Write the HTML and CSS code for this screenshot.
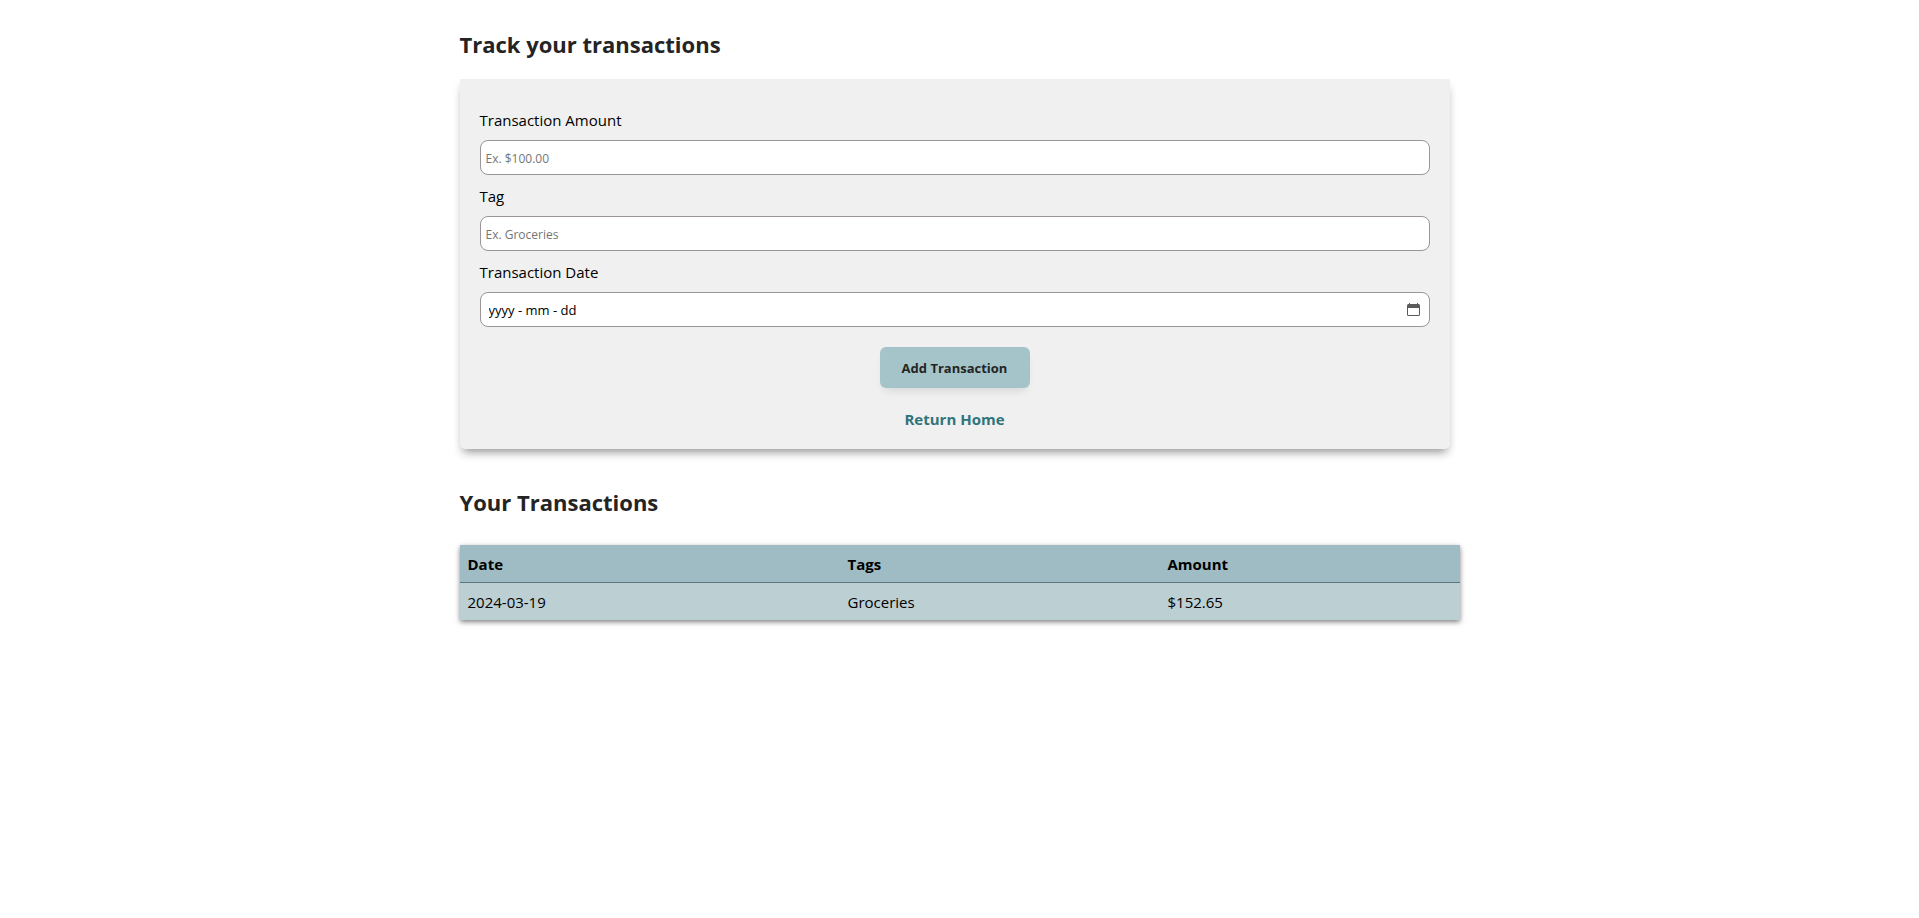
FILE: index.html
```html
<!DOCTYPE html>
<html lang="en">
<head>
<meta charset="utf-8">
<meta name="viewport" content="width=device-width, initial-scale=1">
<title>Track your transactions</title>
<link rel="stylesheet" href="styles.css">
</head>
<body>
<main class="page">
  <h1 class="heading">Track your transactions</h1>
  <form class="card">
    <label class="label" for="amount">Transaction Amount</label>
    <input class="field" id="amount" type="text" placeholder="Ex. $100.00">
    <label class="label" for="tag">Tag</label>
    <input class="field" id="tag" type="text" placeholder="Ex. Groceries">
    <label class="label" for="date">Transaction Date</label>
    <div class="date">
      <input class="field date-field" id="date" type="text" placeholder="yyyy - mm - dd">
      <button class="date-button" type="button" aria-label="Open calendar">
        <svg width="13" height="13" viewBox="0 0 13 13" aria-hidden="true">
          <path fill="#5b5b5b" fill-rule="evenodd" d="M2 0h1v1h7V0h1v1h.5A1.500 1.500 0 0 1 13 2.500v9a1.500 1.500 0 0 1-1.500 1.500h-10A1.500 1.500 0 0 1 0 11.500v-9A1.500 1.500 0 0 1 1.500 1H2zM1 5v6.500q0 .5.5.5h10q.5 0 .5-.5V5z"/>
        </svg>
      </button>
    </div>
    <button class="submit" type="submit">Add Transaction</button>
    <a class="home" href="#">Return Home</a>
  </form>
  <h2 class="heading">Your Transactions</h2>
  <table class="table">
    <thead>
      <tr><th class="col-date">Date</th><th class="col-tags">Tags</th><th>Amount</th></tr>
    </thead>
    <tbody>
      <tr><td>2024-03-19</td><td>Groceries</td><td>$152.65</td></tr>
    </tbody>
  </table>
</main>
</body>
</html>
```
FILE: styles.css
```css
* {
  box-sizing: border-box;
}

body {
  margin: 0;
  background: #fff;
  color: #000;
  font-family: "Segoe UI", "Open Sans", "Noto Sans", sans-serif;
  font-size: 15px;
  line-height: 21px;
}

.page {
  max-width: 1000px;
  margin: 0 auto;
  padding: 28px 0 40px;
}

.heading {
  margin: 0;
  color: #242424;
  font-size: 22px;
  font-weight: 700;
  line-height: 32px;
}

.card {
  display: flex;
  flex-direction: column;
  margin: 19px 10px 37px 0;
  padding: 31px 20px 19px;
  border-radius: 0 0 5px 5px;
  background: #f0f0f0;
  box-shadow: 0 6px 10px -4px rgba(0, 0, 0, 0.4), 0 6px 10px rgba(0, 0, 0, 0.08);
}

.label {
  margin-bottom: 9px;
}

.field {
  width: 100%;
  height: 35px;
  margin: 0 0 11px;
  padding: 2px 5px 0;
  border: 1px solid #9b9597;
  border-radius: 8px;
  background: #fff;
  color: #000;
  font: inherit;
  font-size: 12px;
}

.field::placeholder {
  color: #757575;
  opacity: 1;
}

.date {
  position: relative;
  margin-bottom: 20px;
}

.date-field {
  display: block;
  margin: 0;
  padding: 0 32px 0 8px;
  font-size: 13px;
}

.date-field::placeholder {
  color: #000;
}

.date-button {
  position: absolute;
  top: 8px;
  right: 7px;
  display: flex;
  padding: 3px;
  border: 0;
  background: none;
}

.submit {
  align-self: center;
  width: 150px;
  height: 41px;
  padding: 1px 0 0;
  border: 0;
  border-radius: 6px;
  background: #a5c4c9;
  box-shadow: 0 6px 10px -4px rgba(0, 0, 0, 0.12);
  color: #242424;
  font: inherit;
  font-size: 13px;
  font-weight: 700;
}

.home {
  align-self: center;
  margin-top: 21px;
  color: #2f747b;
  font-weight: 700;
  text-decoration: none;
}

.table {
  width: 100%;
  margin-top: 27px;
  border-collapse: separate;
  border-spacing: 0;
  table-layout: fixed;
  box-shadow: 0 2px 5px rgba(0, 0, 0, 0.5);
  text-align: left;
}

.table th,
.table td {
  padding: 9px 8px 7px;
}

.table th {
  border-bottom: 1px solid #5d757c;
  background: #9fbcc4;
}

.table td {
  background: #bccfd3;
}

.col-date {
  width: 38%;
}

.col-tags {
  width: 32%;
}
```
